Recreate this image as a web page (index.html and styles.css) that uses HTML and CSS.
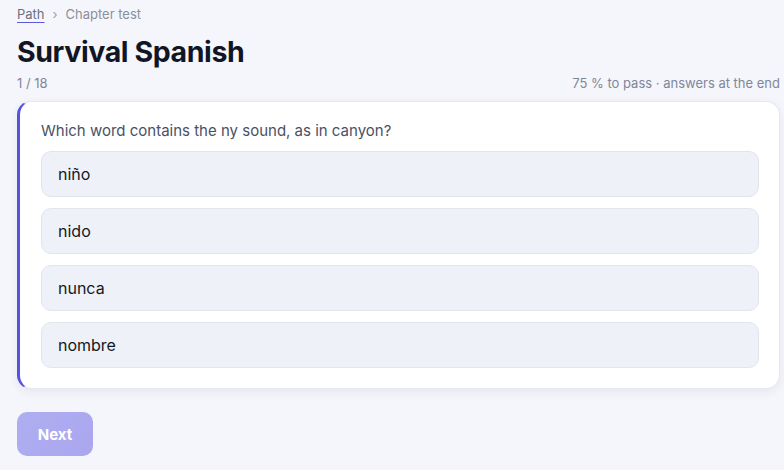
FILE: index.html
```html
<!DOCTYPE html>
<html lang="en">
<head>
<meta charset="utf-8">
<title>Survival Spanish</title>
<link rel="stylesheet" href="styles.css">
</head>
<body>
<main class="page">
  <nav class="crumbs">
    <a class="crumb-link" href="#">Path</a>
    <span class="crumb-sep">›</span>
    <span class="crumb-current">Chapter test</span>
  </nav>
  <h1 class="title">Survival Spanish</h1>
  <div class="meta">
    <span>1 / 18</span>
    <span>75 % to pass · answers at the end</span>
  </div>
  <section class="card">
    <p class="question">Which word contains the ny sound, as in canyon?</p>
    <div class="options">
      <button class="option">niño</button>
      <button class="option">nido</button>
      <button class="option">nunca</button>
      <button class="option">nombre</button>
    </div>
  </section>
  <button class="next" disabled>Next</button>
</main>
</body>
</html>
```

FILE: styles.css
```css
* { box-sizing: border-box; }
html, body { margin: 0; padding: 0; }
body {
  background: #f5f6fb;
  font-family: Inter, "Noto Sans", "Liberation Sans", sans-serif;
  color: #111827;
}
.page {
  padding: 6px 4px 0 17px;
}
.crumbs {
  display: flex;
  align-items: center;
  gap: 8px;
  font-size: 13px;
  line-height: 16px;
  color: #8a8f9c;
}
.crumb-link {
  color: #6b7080;
  text-decoration: underline;
  text-decoration-color: #5b5be0;
  text-underline-offset: 3px;
}
.crumb-sep { color: #9aa0ac; }
.title {
  margin: 12px 0 0;
  font-size: 28.5px;
  line-height: 35px;
  font-weight: 700;
  letter-spacing: -0.4px;
  color: #121624;
}
.meta {
  display: flex;
  justify-content: space-between;
  margin-top: 6px;
  font-size: 13px;
  line-height: 16px;
  color: #80869a;
}
.card {
  margin-top: 10px;
  background: #fff;
  border: 1px solid #e6e8f0;
  border-left: 3px solid #5452e4;
  border-radius: 14px;
  box-shadow: 0 3px 10px rgba(30, 40, 80, 0.07);
  padding: 19px 20px 20px 21px;
}
.question {
  margin: 0 0 10px;
  font-size: 15px;
  line-height: 20px;
  color: #4a5164;
}
.options {
  display: flex;
  flex-direction: column;
  gap: 11px;
}
.option {
  display: block;
  width: 100%;
  height: 46px;
  text-align: left;
  padding: 0 16px;
  background: #eef1f8;
  border: 1px solid #e1e5ef;
  border-radius: 10px;
  font-family: inherit;
  font-size: 16px;
  color: #141824;
}
.next {
  margin-top: 23px;
  width: 76px;
  height: 44px;
  border: none;
  border-radius: 10px;
  background: linear-gradient(135deg, #aeaef2, #aba6ee);
  color: #fff;
  font-family: inherit;
  font-size: 15px;
  font-weight: 700;
}
```
